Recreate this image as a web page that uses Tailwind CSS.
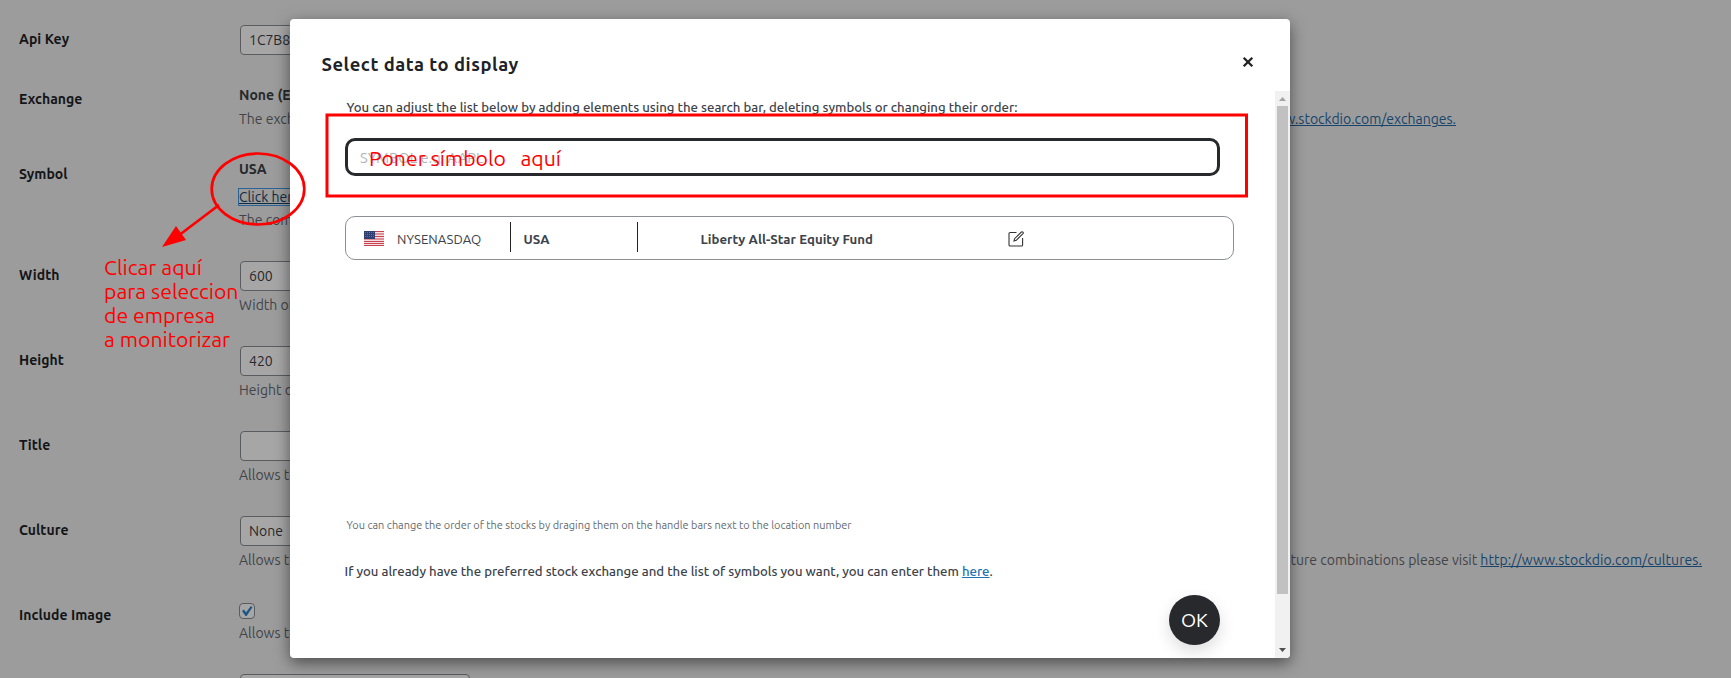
<!DOCTYPE html>
<html lang="en"><head><meta charset="utf-8"><title>Stockdio settings</title>
<script src="https://cdn.jsdelivr.net/npm/@tailwindcss/browser@4"></script></head>
<body class="relative h-[678px] w-[1731px] overflow-hidden bg-[#9c9c9c] font-['Ubuntu','Open_Sans',sans-serif] text-[14px] leading-[20px] text-[#26282b]">
<main class="flex h-full flex-col pl-[19px] [&_b]:w-[220px] [&_b]:shrink-0 [&_b]:pt-[19px] [&_b]:tracking-[.05px] [&_b]:text-[#131518] [&_section]:flex [&_section]:shrink-0 [&_p]:whitespace-nowrap [&_p]:text-[#424448]">
<div class="flex h-[10px] shrink-0 items-end overflow-hidden whitespace-nowrap"><div class="relative -top-[9px] flex"><span class="w-[273px]">Obtain key for use in this plugin, please visit</span><a class="text-[#16446b] underline">http://www.stockdio.com/wplist</a></div></div>
<section class="h-[60px]"><b>Api Key</b><div class="pt-[15px]"><div class="ml-px flex h-[30px] w-[300px] items-center rounded border border-[#5a5c60] bg-[#a6a6a6] px-2">1C7B8</div></div></section>
<section class="h-[75px]"><b>Exchange</b><div class="pt-[15px]"><strong>None (Exchange)</strong><p class="mt-1 flex w-[1217px] justify-between"><span>The exchange</span><a class="text-[#16446b] underline">http://www.stockdio.com/exchanges.</a></p></div></section>
<section class="h-[101px]"><b>Symbol</b><div class="pt-[14px]"><strong>USA</strong><p class="mt-2"><a class="-ml-px border border-[#2a6497] text-[#0b2c45] underline">Click here</a></p><p class="mt-[3px]">The company</p></div></section>
<section class="h-[85px]"><b>Width</b><div class="pt-[15px]"><div class="ml-px flex h-[30px] w-[300px] items-center rounded border border-[#5a5c60] bg-[#a6a6a6] px-2">600</div><p class="mt-1">Width of</p></div></section>
<section class="h-[85px]"><b>Height</b><div class="pt-[15px]"><div class="ml-px flex h-[30px] w-[300px] items-center rounded border border-[#5a5c60] bg-[#a6a6a6] px-2">420</div><p class="mt-1">Height of</p></div></section>
<section class="h-[85px]"><b>Title</b><div class="pt-[15px]"><div class="ml-px h-[30px] w-[300px] rounded border border-[#5a5c60] bg-[#a6a6a6]"></div><p class="mt-1">Allows to</p></div></section>
<section class="h-[85px]"><b>Culture</b><div class="pt-[15px]"><div class="ml-px flex h-[30px] w-[300px] items-center rounded border border-[#5a5c60] bg-[#a6a6a6] px-2">None</div><p class="mt-1 flex w-[1463px] justify-between"><span>Allows to</span><span>culture combinations please visit <a class="tracking-[.07px] text-[#16446b] underline">http://www.stockdio.com/cultures.</a></span></p></div></section>
<section class="h-[73px]"><b>Include Image</b><div class="pt-[17px]"><div class="flex h-4 w-4 items-center justify-center rounded border border-[#5a5c60] bg-[#a6a6a6]"><svg class="h-3 w-3 shrink-0" viewBox="0 0 12 12"><path d="M1 6 3 4.6 5 7.4 9.8 1 11.5 2.2 5.6 11H4.5Z" fill="#1d5685"/></svg></div><p class="mt-[4px]">Allows to</p></div></section>
<div class="ml-[221px] mt-[15px] h-[30px] w-[230px] shrink-0 rounded border border-[#5a5c60] bg-[#a6a6a6]"></div>
</main>

<div class="absolute left-[290px] top-[19px] flex h-[639px] w-[1000px] flex-col overflow-hidden rounded bg-white shadow-[0_5px_15px_rgba(0,0,0,.5)]">
<header class="flex h-[72px] shrink-0 items-center justify-between pl-[31.5px] pr-[36px] pt-[17px]"><h1 class="text-[18.4px] font-bold tracking-[.53px] text-[#1d2327]">Select data to display</h1><svg class="-mt-[3px] h-3 w-3" viewBox="0 0 12 12"><path d="M1.7 1.7 10.3 10.3M10.3 1.7 1.7 10.3" stroke="#222" stroke-width="2.3"/></svg></header>
<div class="flex min-h-0 flex-1">
<div class="flex flex-1 flex-col items-start pl-[55px] text-[13.2px] text-[#3c434a]">
<p class="ml-[1.5px] mt-[6px] font-medium">You can adjust the list below by adding elements using the search bar, deleting symbols or changing their order:</p>
<div class="mt-[21px] flex h-[38px] w-[875px] items-center rounded-[10px] border-[3px] border-[#28292d] pl-3 pt-px text-[14.7px] text-[#b4b5b7]">SYMBOL e.g. AAPL</div>
<div class="mt-[40px] flex h-[44px] w-[889px] items-center rounded-[10px] border border-[#8c8f94] pl-[18px]">
<svg class="mt-px h-[15px] w-5" viewBox="0 0 20 15"><path d="M0 0h20v15H0z" fill="#f6dfe2"/><path d="M0 .5h20M0 3h20M0 5.5h20M0 8h20M0 10.5h20M0 12.5h20M0 14.5h20" stroke="#c8414e"/><path d="M0 0h11v8H0z" fill="#2f3f72"/><path d="M1 1.5h9M1 3.5h9M1 5.5h9" stroke="#8690b4" stroke-width=".6" stroke-dasharray="1 1"/></svg>
<span class="ml-[13px] w-[113px] pt-[2px]">NYSENASDAQ</span>
<div class="-mt-[2px] flex h-[30px] w-[128px] items-center border-x border-[#222] pl-[12.5px] pt-1 font-bold">USA</div>
<span class="ml-[62.5px] w-[307.5px] pt-[2px] font-bold tracking-[.04px]">Liberty All-Star Equity Fund</span>
<svg class="mt-[2px] h-4 w-4" viewBox="0 0 16 16" fill="none" stroke="#333" stroke-width="1.1"><path d="M8.5 1.5H2.2Q1 1.5 1 2.7V14Q1 15 2.2 15H13.5Q14.6 15 14.6 14V7"/><path d="M6 10 6.6 7.7 13.4 1Q14.2.5 14.9 1.2 15.6 2 15 2.7L8.3 9.3Z"/></svg>
</div>
<p class="ml-[1.5px] mt-[255px] text-[10.92px] leading-[20px] text-[#646970]">You can change the order of the stocks by draging them on the handle bars next to the location number</p>
<p class="-ml-[.5px] mt-[26px] font-medium">If you already have the preferred stock exchange and the list of symbols you want, you can enter them <a class="text-[#2271b1] underline">here</a>.</p>
<button class="ml-[824px] mt-[14px] flex h-[50px] w-[51px] shrink-0 items-center justify-center rounded-full bg-[#28292d] text-[19.5px] text-white shadow-[0_6px_16px_rgba(0,0,0,.14)]">OK</button>
</div>
<div class="flex w-[15px] shrink-0 flex-col items-center bg-[#f1f1f1]"><svg class="h-[15px] w-[15px] shrink-0" viewBox="0 0 15 15"><path d="M4 10h7L7.5 6z" fill="#a3a3a3"/></svg><div class="h-[488px] w-[11px] bg-[#c1c1c1]"></div><svg class="mt-auto h-[15px] w-[15px] shrink-0" viewBox="0 0 15 15"><path d="M4 5h7L7.5 9z" fill="#505050"/></svg></div>
</div></div>

<svg class="pointer-events-none absolute inset-0 h-full w-full" viewBox="0 0 1731 678" fill="none" stroke="#f00"><ellipse cx="258" cy="189" rx="46.3" ry="35.5" stroke-width="2.7"/><path d="M219 205 178 236" stroke-width="2.7"/><path d="M162 247 176 226 186 240Z" fill="#f00" stroke="none"/><rect x="327" y="115" width="919.5" height="81" stroke-width="3"/></svg>
<div class="absolute left-[369px] top-[146px] whitespace-pre text-[21.2px] leading-6 text-[#f00]">Poner símbolo   aquí</div>
<div class="absolute left-[104px] top-[255px] whitespace-nowrap text-[21.2px] leading-6 text-[#f00]">Clicar aquí<br>para seleccion<br>de empresa<br>a monitorizar</div>
</body></html>
